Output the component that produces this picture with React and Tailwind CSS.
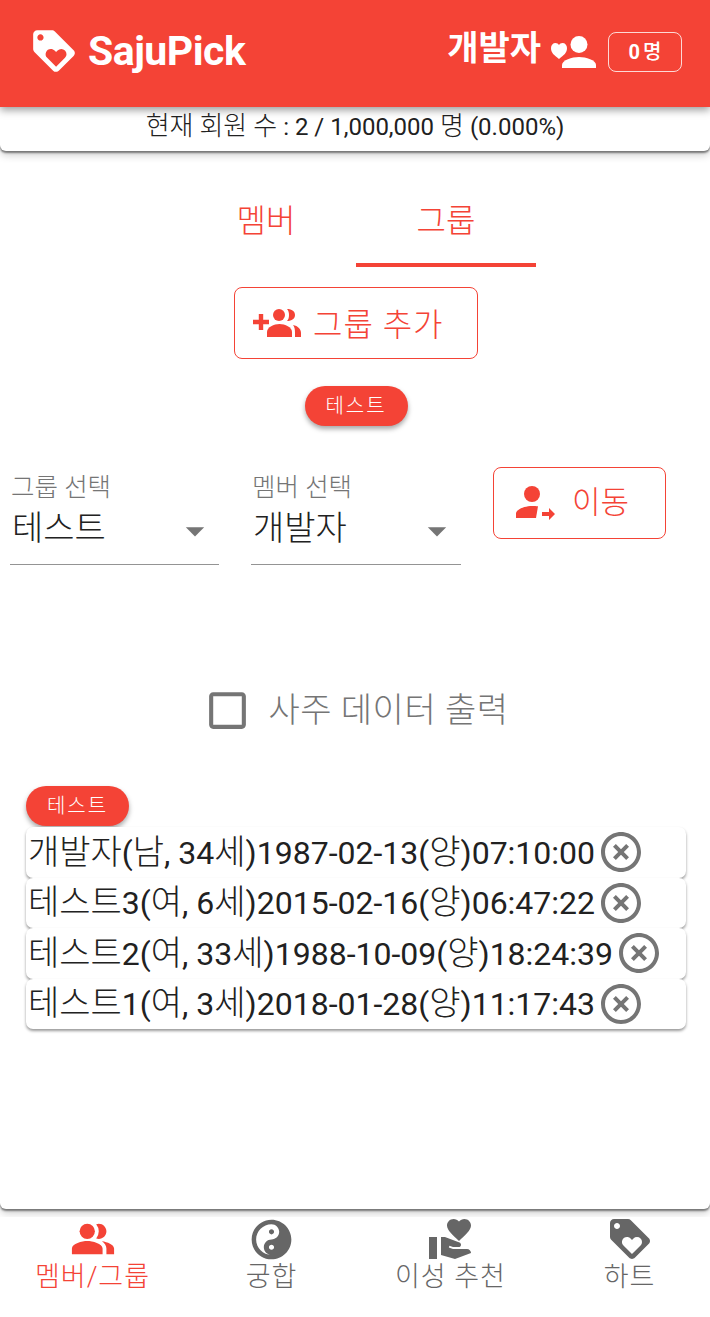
import { MdLoyalty, MdPeopleAlt, MdHighlightOff, MdVolunteerActivism, MdCheckBoxOutlineBlank, MdArrowDropDown } from "react-icons/md";
import { FaYinYang } from "react-icons/fa";

const FONT = "font-['Roboto','Noto_Sans_CJK_KR',sans-serif]";

const members = [
  "개발자(남, 34세)1987-02-13(양)07:10:00",
  "테스트3(여, 6세)2015-02-16(양)06:47:22",
  "테스트2(여, 33세)1988-10-09(양)18:24:39",
  "테스트1(여, 3세)2018-01-28(양)11:17:43",
];

// hangul is set a bit larger and lighter than the digits around it
function Mixed({ text, hangul }) {
  return text.split(/([가-힣]+)/).map((part, i) =>
    i % 2 ? <span key={i} className={hangul}>{part}</span> : part
  );
}

function HeartPerson() {
  return (
    <svg viewBox="0 0 46 34" className="w-[46px] h-[34px] fill-white">
      <path d="M8 24 C3 20 0 18 0 13 C0 10 2 8 4.500 8 C6 8 7.300 8.800 8 10 C8.700 8.800 10 8 11.500 8 C14 8 16 10 16 13 C16 18 13 20 8 24 Z" />
      <circle cx="28" cy="9.500" r="8.500" />
      <path d="M11 33 V30 C11 25 21 22 28 22 C35 22 45 25 45 30 V33 Z" />
    </svg>
  );
}

function GroupPlus() {
  return (
    <svg viewBox="0 0 50 30" className="w-[50px] h-[30px] fill-[#f44336]">
      <path d="M6.800 6 H11.200 V11.800 H17 V16.200 H11.200 V22 H6.800 V16.200 H1 V11.800 H6.800 Z" />
      <circle cx="27" cy="7" r="6" />
      <path d="M15 29 V24 C15 19 22 16 27.500 16 C33 16 40 19 40 24 V29 Z" />
      <path d="M35 1 C40 1 43 3.500 43 7 C43 10.500 40 13 35 13 C36.500 11.500 37 9.500 37 7 C37 4.500 36.500 2.500 35 1 Z" />
      <path d="M41 17 C46 18 49 21 49 25 V29 H43 V25 C43 21 42.500 19 41 17 Z" />
    </svg>
  );
}

function PersonMove() {
  return (
    <svg viewBox="0 0 40 34" className="w-[40px] h-[34px] fill-[#f44336]">
      <circle cx="16" cy="8" r="8" />
      <path d="M0 32 V27 C1 23 9 20 16 20 C18 20 20.500 20 22 20.300 L20 32 Z" />
      <path d="M26 26 H33 V22 L39 28 L33 34 V30 H26 Z" />
    </svg>
  );
}

function Chip() {
  return (
    <div className="flex items-center justify-center h-[40px] w-[103px] rounded-[20px] bg-[#f44336] text-white text-[20px] font-light tracking-[2px] shadow-[0_3px_5px_rgba(0,0,0,0.35)]">
      테스트
    </div>
  );
}

function SelectBox({ label, value, className = "" }) {
  return (
    <div className={`relative h-[98px] border-b border-[#949494] ${className}`}>
      <div className="pl-px pt-[6px] text-[25.500px] leading-[28px] font-light text-[#757575]">{label}</div>
      <div className="pl-[2px] mt-[5px] text-[34px] leading-[44px] font-light text-[#212121]">{value}</div>
      <MdArrowDropDown className="absolute right-[2px] top-[42px] text-[#757575]" size={44} />
    </div>
  );
}

function NavItem({ icon, label, active }) {
  return (
    <div className={`flex flex-col items-center ${active ? "text-[#f44336]" : "text-[#666666]"}`}>
      <div className="h-[42px] flex items-center justify-center">{icon}</div>
      <div className="text-[27px] leading-[34px] font-light tracking-[1px]">{label}</div>
    </div>
  );
}

export default function App() {
  return (
    <div className={`${FONT} relative w-[710px] h-[1317px] bg-white overflow-hidden`}>
      <header className="relative z-20 h-[107px] bg-[#f44336] text-white flex items-start shadow-[0_3px_8px_rgba(0,0,0,0.4)]">
        <MdLoyalty className="ml-[29px] mt-[26px] w-[50px] h-[50px]" />
        <div className="ml-[9px] mt-[26px] text-[41px] leading-[50px] font-bold tracking-[-0.5px]">SajuPick</div>
        <div className="ml-auto mt-[27px] text-[34px] leading-[42px] font-bold">개발자</div>
        <div className="ml-[10px] mt-[35px]"><HeartPerson /></div>
        <div className="ml-[11px] mr-[28px] mt-[32px] w-[74px] h-[40px] rounded-[8px] border border-[#ffffffcc] flex items-center justify-center text-[20px] font-bold">
          0<span className="ml-[3px] font-medium">명</span>
        </div>
      </header>

      <div className="relative z-10 h-[44px] rounded-b-[6px] bg-white shadow-[0_2px_2px_rgba(0,0,0,0.45),0_4px_8px_rgba(0,0,0,0.2)] text-center text-[24px] leading-[38px] text-[#212121]">
        <Mixed text="현재 회원 수 : 2 / 1,000,000 명 (0.000%)" hangul="text-[26px] font-light" />
      </div>

      <main className="h-[1058px] rounded-b-[6px] bg-white shadow-[0_2px_2px_rgba(0,0,0,0.45),0_4px_8px_rgba(0,0,0,0.2)] flex flex-col">
        <div className="mt-[26px] h-[90px] pl-[2px] flex justify-center">
          <div className="w-[180px] pt-[24px] text-center text-[32px] leading-[40px] font-light text-[#f44336]">멤버</div>
          <div className="w-[180px] pt-[24px] text-center text-[32px] leading-[40px] font-light text-[#f44336] border-b-[4px] border-[#f44336]">그룹</div>
        </div>

        <div className="mt-[20px] pl-[2px] flex justify-center">
          <button className="w-[244px] h-[72px] rounded-[8px] border border-[#f44336] flex items-center pl-[17px] text-[#f44336]">
            <GroupPlus />
            <span className="ml-[11px] pt-[3px] text-[32px] font-light tracking-[1px]">그룹 추가</span>
          </button>
        </div>

        <div className="mt-[27px] pl-[2px] flex justify-center">
          <Chip />
        </div>

        <div className="mt-[41px] flex items-start pl-[10px]">
          <SelectBox label="그룹 선택" value="테스트" className="w-[209px]" />
          <SelectBox label="멤버 선택" value="개발자" className="ml-[32px] w-[210px]" />
          <button className="ml-[32px] w-[173px] h-[72px] rounded-[8px] border border-[#f44336] flex items-center pl-[22px] text-[#f44336]">
            <PersonMove />
            <span className="ml-[16px] text-[31px] font-light">이동</span>
          </button>
        </div>

        <div className="mt-[120px] pl-[2px] flex items-center justify-center h-[50px] text-[#757575]">
          <MdCheckBoxOutlineBlank size={49} className="mr-[16px]" />
          <span className="text-[34px] font-light tracking-[0.5px]">사주 데이터 출력</span>
        </div>

        <div className="mt-[51px] pl-[26px] pr-[24px]">
          <Chip />
          <div className="mt-[1px] flex flex-col">
            {members.map((m) => (
              <div key={m} className="h-[50.500px] rounded-[7px] bg-white shadow-[0_2px_3px_rgba(0,0,0,0.4)] flex items-center pl-[2px] text-[32px] leading-[44px] text-[#212121] whitespace-nowrap">
                <span><Mixed text={m} hangul="text-[34px] font-light" /></span>
                <MdHighlightOff size={48} className="ml-[2px] text-[#757575] shrink-0" />
              </div>
            ))}
          </div>
        </div>
      </main>

      <nav className="relative mt-[8px] h-[100px] bg-white grid grid-cols-[repeat(4,179px)] pl-[3px] pt-[1px]">
        <NavItem active label="멤버/그룹" icon={<MdPeopleAlt size={46} />} />
        <NavItem label="궁합" icon={<FaYinYang size={41} />} />
        <NavItem label="이성 추천" icon={<MdVolunteerActivism size={48} />} />
        <NavItem label="하트" icon={<MdLoyalty size={48} />} />
      </nav>
    </div>
  );
}
